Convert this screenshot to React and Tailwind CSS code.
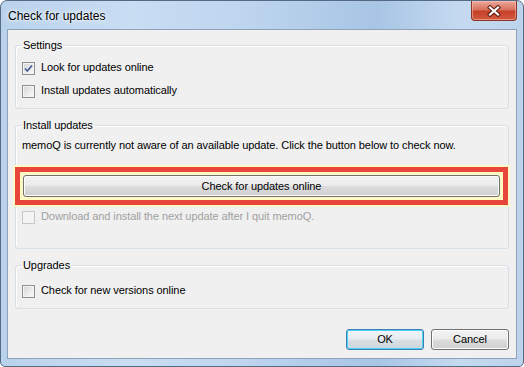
import React from 'react'

function CheckBox({ checked, disabled }) {
  return (
    <span
      className={
        'relative inline-block w-[13px] h-[13px] shrink-0 border ' +
        (disabled
          ? 'border-[#c8c8c8] bg-[#f4f4f4]'
          : 'border-[#8e8f8f] bg-[linear-gradient(135deg,#d3d4d6_0%,#ebebeb_55%,#fbfbfb_100%)] shadow-[inset_0_0_0_1px_#f4f4f4]')
      }
    >
      {checked && (
        <svg viewBox="0 0 11 11" className="absolute left-0 top-0 w-[11px] h-[11px]">
          <path d="M2 5.5 L4.3 8 L9 2.5" fill="none" stroke="#4a5f97" strokeWidth="1.8" />
        </svg>
      )}
    </span>
  )
}

function Row({ checked, disabled, children }) {
  return (
    <div className="flex items-center h-[23px] gap-[6px]">
      <CheckBox checked={checked} disabled={disabled} />
      <span className={'leading-[13px] -mt-[2px] ' + (disabled ? 'text-[#a0a0a0]' : 'text-black')}>{children}</span>
    </div>
  )
}

function Group({ title, className = '', children }) {
  return (
    <fieldset className={'border border-[#d5dfe5] rounded-[3px] px-[6px] shadow-[inset_1px_1px_0_#fff] ' + className}>
      <legend className="px-[1px] leading-[14px] text-black">{title}</legend>
      {children}
    </fieldset>
  )
}

export default function App() {
  return (
    <div className="w-[524px] h-[367px] text-[11px] tracking-[-0.08px] font-['Liberation_Sans',Arial,sans-serif]">
      <div className="flex flex-col h-full rounded-t-[7px] rounded-b-[5px] border border-[#566b83] bg-[linear-gradient(90deg,#b9d2ec_0%,#c9ddf3_25%,#bfd6ef_45%,#a8c5e5_72%,#c5daf0_88%,#bcd3ec_100%)]">
        {/* title bar */}
        <div className="flex items-start justify-between h-[28px] shrink-0">
          <div className="pl-[7px] pt-[8px] text-[12px] tracking-normal leading-[14px] text-black [text-shadow:0_0_6px_#fff,0_0_3px_#fff]">
            Check for updates
          </div>
          <div className="mr-[6px] w-[46px] h-[20px] rounded-b-[4px] border border-t-0 border-[#8a3526] bg-[linear-gradient(180deg,#e9a99c_0%,#d9725d_45%,#c7402a_55%,#d25a3e_100%)] shadow-[inset_0_0_0_1px_rgba(255,200,190,0.5)] flex items-center justify-center">
            <svg width="18" height="12" viewBox="0 0 18 12">
              <path d="M5 2.5 L13 9.5 M13 2.5 L5 9.5" stroke="#5a1e14" strokeWidth="4.2" strokeLinecap="square" />
              <path d="M5 2.5 L13 9.5 M13 2.5 L5 9.5" stroke="#fff" strokeWidth="2.2" strokeLinecap="square" />
            </svg>
          </div>
        </div>

        {/* client area */}
        <div className="mx-[6px] h-[330px] shrink-0 border border-[#8ea3ba] bg-[#f0f0f0] px-[7px] pt-[8px] flex flex-col">
          <Group title="Settings" className="pb-[5px]">
            <div className="pt-[5px]">
              <Row checked>Look for updates online</Row>
              <Row>Install updates automatically</Row>
            </div>
          </Group>

          <Group title="Install updates" className="mt-[9px] pb-[19px]">
            <div className="pt-[6px] leading-[14px] text-black">
              memoQ is currently not aware of an available update. Click the button below to check now.
            </div>
            <div className="mt-[15px] -ml-[7px] -mr-[6px] border-[5px] border-[#e8463a] bg-[#fcf8c4] p-[3px] shadow-[0_0_0_2px_#fcf8c8]">
              <button className="w-full h-[22px] rounded-[3px] border border-[#707070] bg-[linear-gradient(180deg,#f2f2f2_0%,#ebebeb_48%,#dddddd_52%,#cfcfcf_100%)] shadow-[inset_0_0_0_1px_#fcfcfc] text-black leading-[13px]">
                Check for updates online
              </button>
            </div>
            <div className="mt-[1px]">
              <Row disabled>Download and install the next update after I quit memoQ.</Row>
            </div>
          </Group>

          <Group title="Upgrades" className="mt-[9px] pb-[5px]">
            <div className="pt-[8px]">
              <Row>Check for new versions online</Row>
            </div>
          </Group>

          <div className="mt-[20px] flex justify-end gap-[7px]">
            <button className="w-[78px] h-[21px] rounded-[3px] border border-[#3c7fb1] bg-[linear-gradient(180deg,#f0f4f7_0%,#e7ecf0_48%,#d8dfe5_52%,#cdd5dc_100%)] shadow-[inset_0_0_0_1px_#48d2f7] text-black leading-[13px]">
              OK
            </button>
            <button className="w-[78px] h-[21px] rounded-[3px] border border-[#707070] bg-[linear-gradient(180deg,#f2f2f2_0%,#ebebeb_48%,#dddddd_52%,#cfcfcf_100%)] shadow-[inset_0_0_0_1px_#fcfcfc] text-black leading-[13px]">
              Cancel
            </button>
          </div>
        </div>
      </div>
    </div>
  )
}
